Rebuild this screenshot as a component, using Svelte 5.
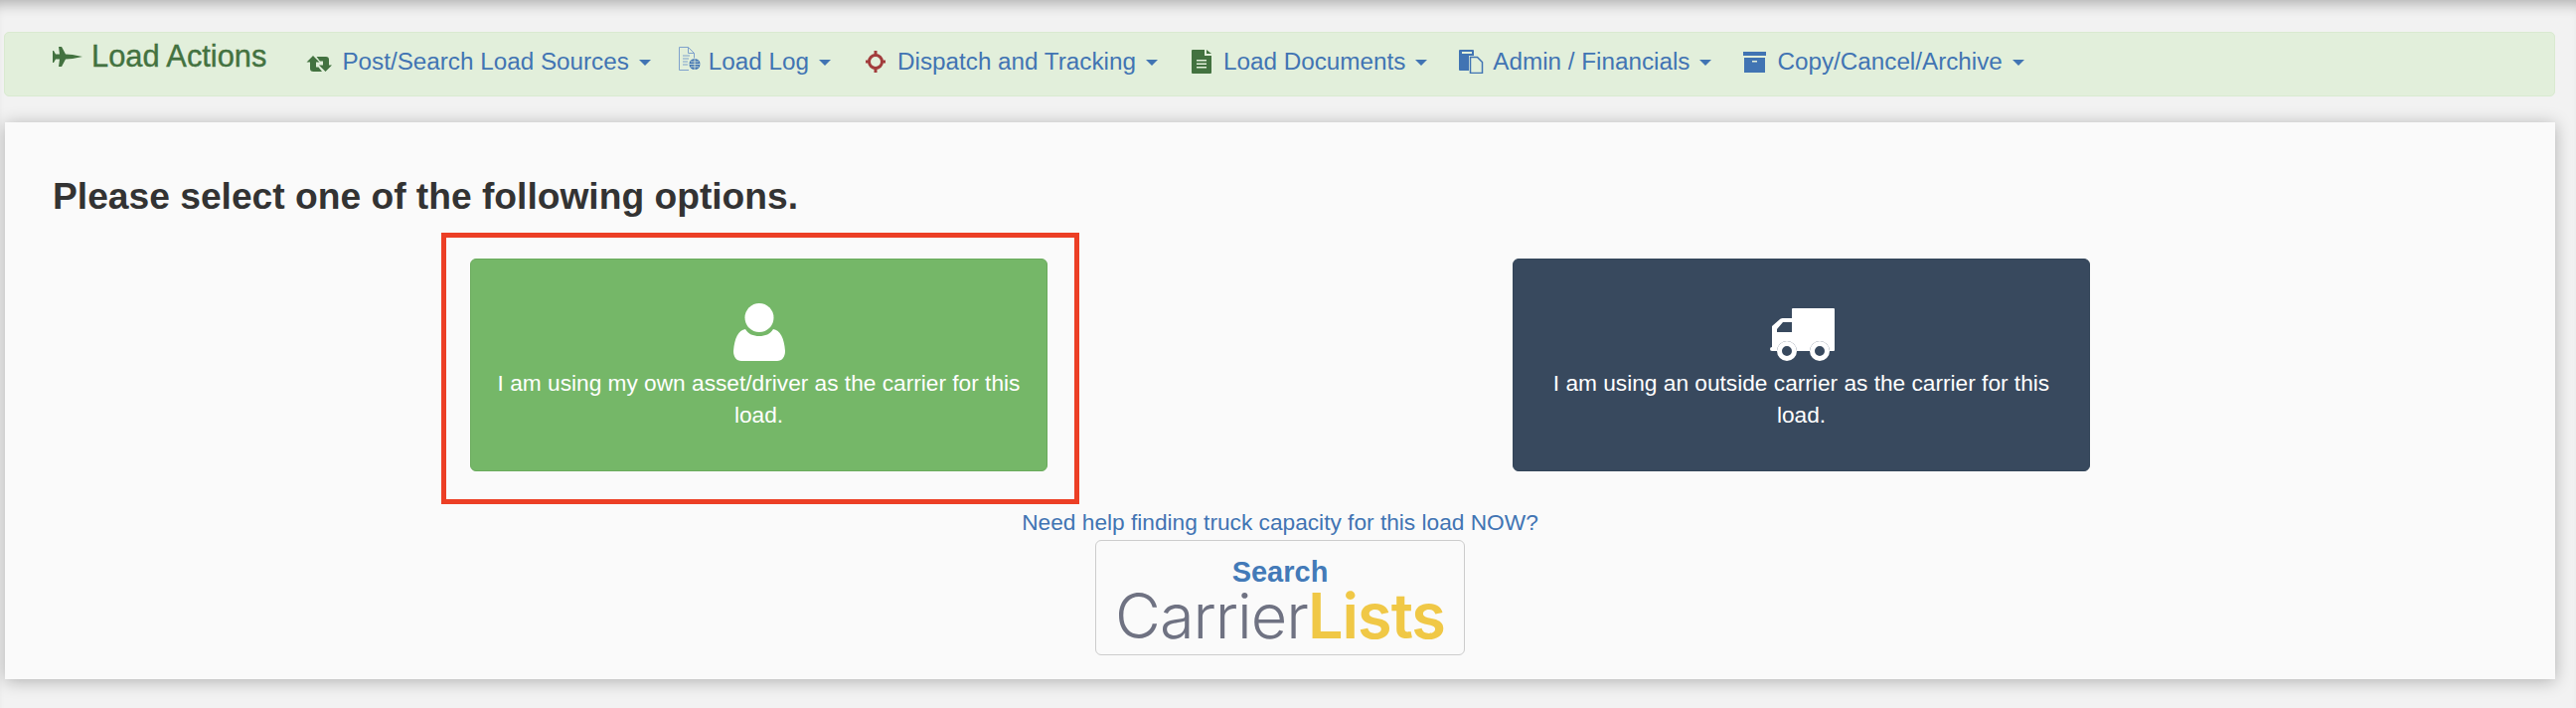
<script lang="ts">
  const menus = [
    { id: "retweet", label: "Post/Search Load Sources" },
    { id: "log", label: "Load Log" },
    { id: "target", label: "Dispatch and Tracking" },
    { id: "doc", label: "Load Documents" },
    { id: "copy", label: "Admin / Financials" },
    { id: "archive", label: "Copy/Cancel/Archive" },
  ];
</script>

<div class="page">
  <div class="actions">
    <h4 class="actions-title">
      <svg class="plane" viewBox="0 0 30 20" aria-hidden="true">
        <path d="M30 10L20 8l-7-.5L9 0H6l1 7.500H3L1 4H0v12h1l2-3.500h4L6 20h3l4-7.500 7-.5z" />
      </svg>
      Load Actions
    </h4>
    <ul class="menus">
      {#each menus as m (m.id)}
        <li class="menu">
          {#if m.id === "retweet"}
            <svg class="ico i-retweet" viewBox="0 0 26 16">
              <path d="M7 0l6.500 6.500H10v5h2.500l3.500 4.500H7.500C5 16 4 15 4 13V6.500H.5z" />
              <path d="M10.500 1H20c2 0 3 1 3 3v5.500h3L19.500 16 13 9.500h4v-4h-3z" />
            </svg>
          {:else if m.id === "log"}
            <svg class="ico i-log" viewBox="0 0 23 24">
              <path class="pale" d="M1.500 .5h9l6 6v5M11 23.500H1.500V.5M10.500 .5v6h6M5 9h7M5 12h6M5 15h5M5 18h5" />
              <circle class="globe" cx="17" cy="17.500" r="5.500" />
              <path class="grid" d="M11.500 17.500h11M17 12v11M13 15h8M13 20h8" />
            </svg>
          {:else if m.id === "target"}
            <svg class="ico i-target" viewBox="0 0 20 22">
              <circle cx="10" cy="11" r="6.500" />
              <path d="M10 0v6M10 16v6M0 11h5M15 11h5" />
            </svg>
          {:else if m.id === "doc"}
            <svg class="ico i-doc" viewBox="0 0 20 24">
              <path d="M1 0h12v6h7v17a1 1 0 0 1-1 1H1a1 1 0 0 1-1-1V1a1 1 0 0 1 1-1zM15 0l5 4h-5zM5 10v1.500h10V10zM5 13.500V15h10v-1.500zM5 17v1.500h10V17z" fill-rule="evenodd" />
            </svg>
          {:else if m.id === "copy"}
            <svg class="ico i-copy" viewBox="0 0 25 24">
              <path d="M1 0h13a1 1 0 0 1 1 1v5h-5v15H1a1 1 0 0 1-1-1V1a1 1 0 0 1 1-1zM3 2v2h10V2z" fill-rule="evenodd" />
              <path d="M11.500 7.500h7l5 5v11h-12z" class="sheet" />
            </svg>
          {:else}
            <svg class="ico i-archive" viewBox="0 0 23 21">
              <path d="M0 0h23v4H0zM1 6h21v15H1zM9 9v1.500h5V9z" fill-rule="evenodd" />
            </svg>
          {/if}
          <span>{m.label}</span>
          <i class="caret"></i>
        </li>
      {/each}
    </ul>
  </div>

  <div class="panel">
    <h3>Please select one of the following options.</h3>
    <div class="choices">
      <button class="choice own">
        <svg class="big-ico" width="54" height="58" viewBox="0 0 54 58">
          <ellipse cx="27" cy="14.500" rx="14.500" ry="14.500" />
          <path d="M13 26c3 5 8 7 14 7s11-2 14-7c7 1 11 9 12 22 0 6-3 10-8 10H9c-5 0-8-4-8-10 1-13 5-21 12-22z" />
        </svg>
        I am using my own asset/driver as the carrier for this load.
        <span class="callout"></span>
      </button>
      <button class="choice outside">
        <svg class="big-ico truck" width="66" height="58" viewBox="0 -5 66 58">
          <path fill-rule="evenodd" d="M22 1a1 1 0 0 1 1-1h41a1 1 0 0 1 1 1v41a1 1 0 0 1-1 1h-4a10 10 0 0 0-20 0H27a10 10 0 0 0-20 0H2a2 2 0 0 1 0-4V18l8-7c1-1 2-1 4-1h8zM22 14h-9l-6 7v3h15z" />
          <path fill-rule="evenodd" d="M17 33a10 10 0 1 1 0 20 10 10 0 0 1 0-20zM17 38a5 5 0 1 0 0 10 5 5 0 0 0 0-10zM50 33a10 10 0 1 1 0 20 10 10 0 0 1 0-20zM50 38a5 5 0 1 0 0 10 5 5 0 0 0 0-10z" />
        </svg>
        I am using an outside carrier as the carrier for this load.
      </button>
    </div>
    <div class="capacity">
      <a href="#capacity">Need help finding truck capacity for this load NOW?</a>
      <a class="logo" href="#search">
        <span class="logo-search">Search</span>
        <span class="logo-name">Carrier<b>Lists</b></span>
      </a>
    </div>
  </div>
</div>

<style>
  :global(body) {
    margin: 0;
    background: #f2f2f2;
  }

  .page {
    height: 712px;
    box-sizing: border-box;
    padding: 32px 21px 0 5px;
    font-family: "Liberation Sans", Arial, sans-serif;
    font-size: 22.700px;
    line-height: 32px;
    color: #333;
    box-shadow: inset 0 14px 14px -10px rgba(0, 0, 0, 0.28);
    overflow: hidden;
  }

  /* Load actions bar */
  .actions {
    display: flex;
    align-items: flex-start;
    height: 65px;
    box-sizing: border-box;
    margin-left: -1px;
    padding-left: 48px;
    background: #e2efdb;
    border: 1px solid #d9ead0;
    border-radius: 5px;
  }

  .actions-title {
    display: flex;
    align-items: center;
    gap: 9px;
    margin: 8px 0 0;
    font-size: 30.800px;
    font-weight: 400;
    line-height: 32px;
    color: #437240;
    -webkit-text-stroke: 0.4px #437240;
  }

  .plane {
    width: 30px;
    height: 20px;
    fill: #437240;
  }

  .menus {
    display: flex;
    gap: 32px;
    margin: 0 0 0 40px;
    padding: 13px 0 0;
    list-style: none;
    font-size: 24.250px;
    color: #4174b3;
  }

  .menu {
    display: flex;
    align-items: center;
    height: 32px;
    white-space: nowrap;
  }

  .ico {
    flex: none;
  }
  .i-retweet {
    width: 26px;
    height: 16px;
    margin: 3px 10px 0 0;
    fill: #437240;
  }
  .i-log {
    width: 23px;
    height: 24px;
    margin: -6px 8px 0 -5px;
  }
  .pale {
    fill: none;
    stroke: #7fa2cc;
    stroke-width: 1;
  }
  .globe {
    fill: #4174b3;
  }
  .grid {
    fill: none;
    stroke: #e2efdb;
    stroke-width: 0.8;
  }
  .i-target {
    width: 20px;
    height: 22px;
    margin: 0 12px 0 3px;
    fill: none;
    stroke: #a23c3c;
    stroke-width: 3;
  }
  .i-doc {
    width: 20px;
    height: 24px;
    margin: 0 12px 0 2px;
    fill: #437240;
  }
  .i-copy {
    width: 25px;
    height: 24px;
    margin-right: 9px;
    fill: #4174b3;
  }
  .sheet {
    fill: #e2efdb;
    stroke: #4174b3;
    stroke-width: 1.500;
  }
  .i-archive {
    width: 23px;
    height: 21px;
    margin: 0 11px 0 0;
    fill: #4174b3;
  }

  .caret {
    width: 0;
    height: 0;
    margin-left: 10px;
    margin-top: 2px;
    border-top: 6.500px solid #4174b3;
    border-left: 6px solid transparent;
    border-right: 6px solid transparent;
  }

  /* Main panel */
  .panel {
    height: 560px;
    box-sizing: border-box;
    margin-top: 26px;
    padding: 54px 0 0 48px;
    background: #fafafa;
    box-shadow: 0 2px 16px rgba(0, 0, 0, 0.28);
  }

  h3 {
    margin: 0;
    font-size: 37.200px;
    font-weight: 700;
    line-height: 40px;
    color: #333;
  }

  .choices {
    display: grid;
    grid-template-columns: 581px 581px;
    gap: 468px;
    margin: 43px 0 0 420px;
  }

  .choice {
    position: relative;
    display: flex;
    flex-direction: column;
    align-items: center;
    height: 214px;
    box-sizing: border-box;
    padding: 44px 26px 0;
    border: 1px solid transparent;
    border-radius: 6px;
    font: inherit;
    color: #fff;
    text-align: center;
  }
  .own {
    background: #75b768;
    border-color: #6aab5c;
  }
  .outside {
    background: #38495e;
    border-color: #334559;
  }

  .big-ico {
    flex: none;
    margin-bottom: 6px;
    fill: #fff;
  }
  .truck {
    margin-left: 3px;
  }

  /* Red annotation drawn over the screenshot */
  .callout {
    position: absolute;
    top: -27px;
    left: -30px;
    right: -33px;
    bottom: -34px;
    border: 5px solid #ec3f25;
    pointer-events: none;
  }

  .capacity {
    display: flex;
    flex-direction: column;
    align-items: center;
    margin: 35px 0 0 -48px;
  }

  .capacity a {
    color: #4174b3;
    text-decoration: none;
  }

  .capacity .logo {
    display: flex;
    flex-direction: column;
    align-items: center;
    width: 372px;
    height: 116px;
    box-sizing: border-box;
    margin-top: 2px;
    border: 1px solid #ccc;
    border-radius: 6px;
  }

  .logo-search {
    margin-top: 15px;
    font-size: 29px;
    font-weight: 700;
    line-height: 32px;
    color: #437ab8;
  }

  .logo-name {
    margin-top: 2px;
    font-family: Inter, "Liberation Sans", sans-serif;
    font-size: 63px;
    font-weight: 300;
    line-height: 52px;
    letter-spacing: -1px;
    color: #6f7282;
  }
  .logo-name b {
    font-weight: 600;
    color: #f0c846;
  }
</style>
